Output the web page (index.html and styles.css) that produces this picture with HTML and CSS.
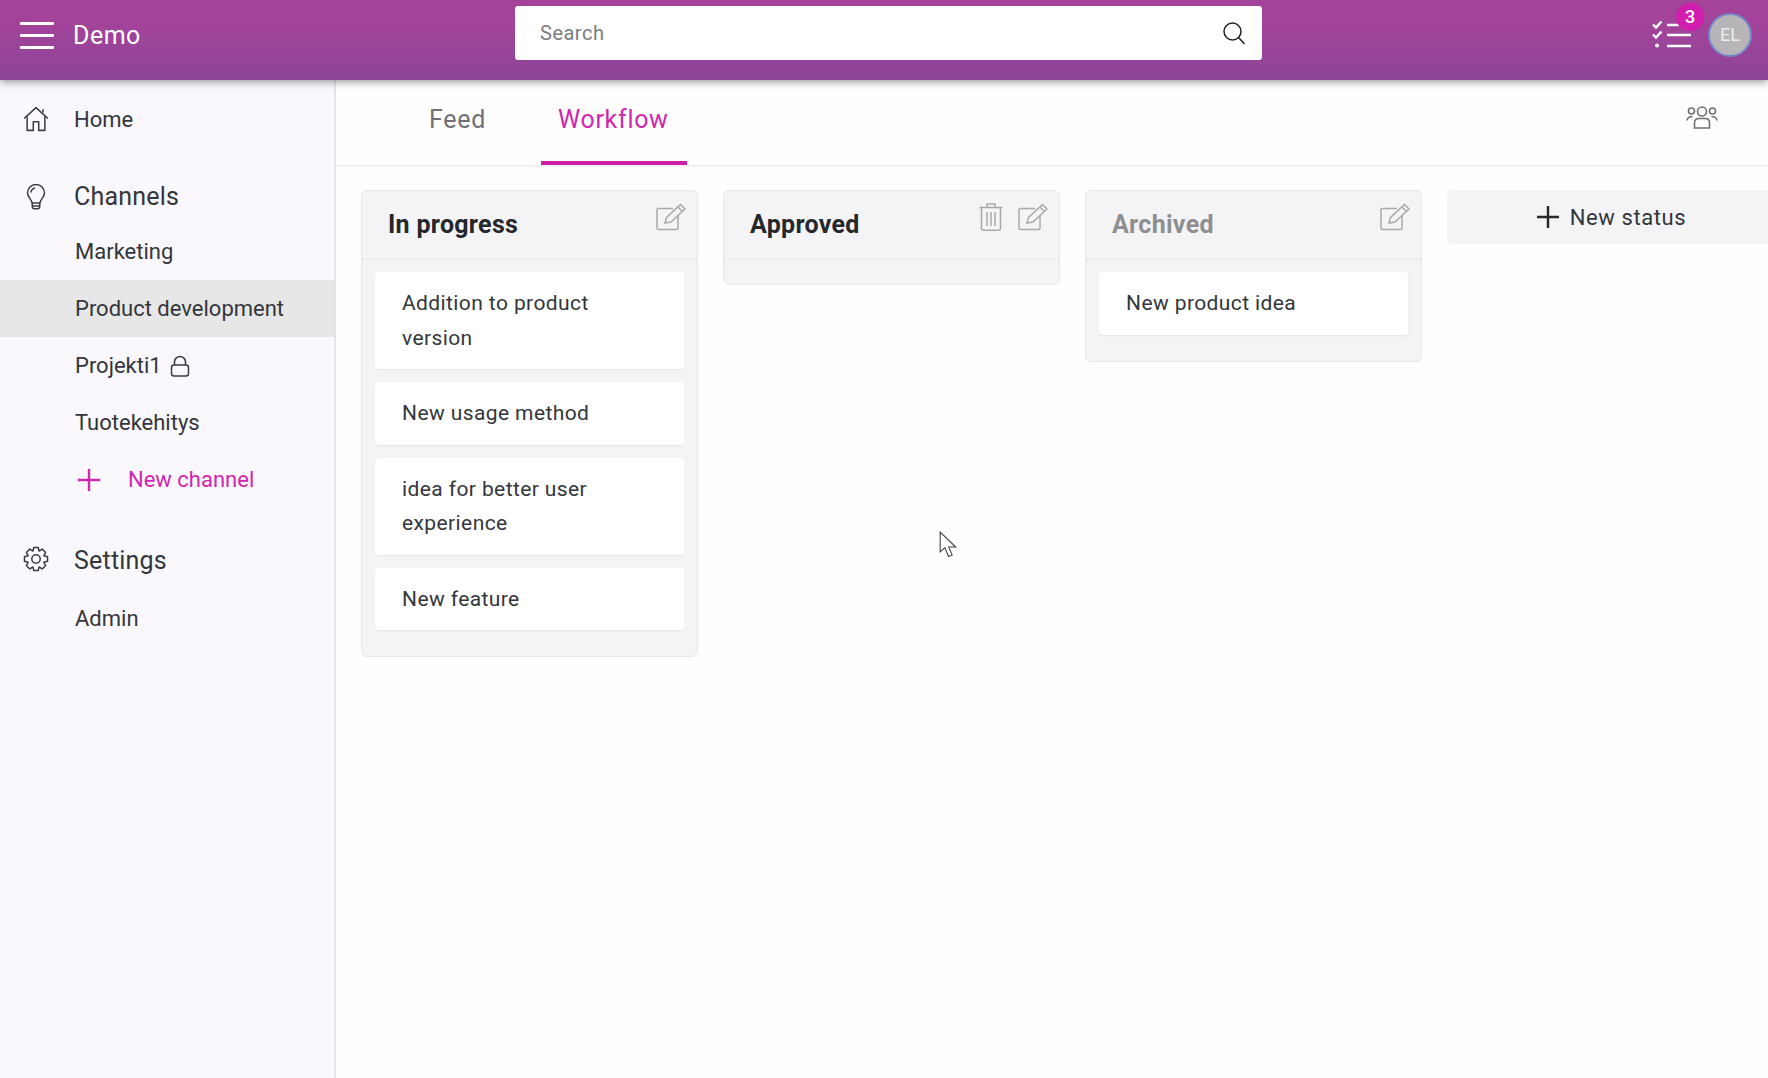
FILE: index.html
```html
<!DOCTYPE html>
<html lang="en">
<head>
  <meta charset="utf-8">
  <title>Demo</title>
  <link rel="stylesheet" href="styles.css">
</head>
<body>
  <!-- Top bar -->
  <header class="topbar">
    <div class="brand">
      <button class="menu-btn" aria-label="Menu"><span></span><span></span><span></span></button>
      <span class="brand-name">Demo</span>
    </div>
    <div class="search">
      <span class="search-text">Search</span>
      <svg class="search-icon" viewBox="0 0 24 24" fill="none" stroke="#222" stroke-width="1.5"><circle cx="10.5" cy="10.5" r="8.5"/><path d="M16.6 16.6 22.5 23"/></svg>
    </div>
    <div class="topbar-right">
      <div class="tasks">
        <svg class="tasks-icon" viewBox="0 0 40 28" fill="none" stroke="#fff" stroke-width="2.4">
          <path d="M1 4.5 4 7.5 9.5 1.5M1 14.5 4 17.5 9.5 11.5"/>
          <path d="M15 5H27M15 15H39M15 26H39"/>
          <circle cx="5" cy="25.5" r="2" fill="#fff" stroke="none"/>
        </svg>
        <span class="badge">3</span>
      </div>
      <div class="avatar">EL</div>
    </div>
  </header>

  <div class="layout">
    <!-- Sidebar -->
    <nav class="sidebar">
      <a class="nav-top nav-home">
        <svg class="nav-icon" viewBox="0 0 24 24" fill="none" stroke="#3a3d42" stroke-width="1.4" stroke-linejoin="round"><path d="M1 11.5 12 1.5 23 11.5"/><path d="M3.8 9.5V22.5H9.5V14.5H14.5V22.5H20.2V9.5"/><path d="M18.5 3V6"/></svg>
        Home
      </a>
      <a class="nav-top nav-head">
        <svg class="nav-icon" viewBox="0 0 24 26" fill="none" stroke="#3a3d42" stroke-width="1.5" stroke-linejoin="round"><path d="M8 19C8 15.5 3.500 13.500 3.500 9A8.500 8.500 0 0 1 20.500 9C20.500 13.500 16 15.500 16 19Z"/><path d="M8.300 19V22.500Q8.300 24.800 10.500 24.800H13.500Q15.700 24.800 15.700 22.500V19M8.500 22H15.500"/><path d="M7 8.500A5 5 0 0 1 11 4"/></svg>
        Channels
      </a>
      <a class="nav-sub">Marketing</a>
      <a class="nav-sub is-active">Product development</a>
      <a class="nav-sub">Projekti1
        <svg class="lock-icon" viewBox="0 0 20 22" fill="none" stroke="#3a3d42" stroke-width="1.5"><rect x="1.500" y="10" width="17" height="11" rx="2.500"/><path d="M4.500 10V7A5.500 5.500 0 0 1 15.500 7V10"/></svg>
      </a>
      <a class="nav-sub">Tuotekehitys</a>
      <a class="nav-sub nav-new">
        <svg class="plus-icon" viewBox="0 0 22 22" stroke="#d126ae" stroke-width="2.400"><path d="M11 0V22M0 11H22"/></svg>
        New channel
      </a>
      <a class="nav-top nav-head nav-settings">
        <svg class="nav-icon" viewBox="0 0 26 26" fill="none" stroke="#3a3d42" stroke-width="1.5" stroke-linejoin="round"><circle cx="13" cy="13" r="4.200"/><path d="M10.800 1.500H15.200L16 5 19.300 3.100 22.600 6.500 20.800 9.700 24.500 10.800V15.200L20.800 16.300 22.600 19.500 19.300 22.900 16 21 15.200 24.500H10.800L10 21 6.700 22.900 3.400 19.500 5.200 16.300 1.500 15.200V10.800L5.200 9.700 3.400 6.500 6.700 3.100 10 5Z"/></svg>
        Settings
      </a>
      <a class="nav-sub">Admin</a>
    </nav>

    <!-- Main area -->
    <main class="content">
      <div class="tabs">
        <a class="tab">Feed</a>
        <a class="tab is-active">Workflow</a>
        <svg class="users-icon" viewBox="0 0 32 23" fill="none" stroke="#6d7176" stroke-width="1.600"><circle cx="16" cy="5.500" r="4.500"/><circle cx="5.500" cy="5" r="3"/><circle cx="26.500" cy="5" r="3"/><path d="M8.500 22V17Q8.500 12.500 13 12.500H19Q23.500 12.500 23.500 17V22Z"/><path d="M1 14.500Q1.500 10.500 6.500 10.500M31 14.500Q30.500 10.500 25.500 10.500"/></svg>
      </div>

      <div class="board">
        <section class="column">
          <div class="column-head">
            <h2>In progress</h2>
            <div class="column-actions">
              <svg class="edit-icon" viewBox="0 0 30 28" fill="none" stroke="#a9a9a9" stroke-width="1.500"><path d="M22 12.500V25Q22 26.500 20.500 26.500H2.500Q1 26.500 1 25V7Q1 5.500 2.500 5.500H17"/><path d="M9 20 10.500 14.500 24.500 1.500 29 6 15 19Z"/><path d="M22 4 26.500 8.500"/></svg>
            </div>
          </div>
          <div class="card">Addition to product version</div>
          <div class="card">New usage method</div>
          <div class="card">idea for better user experience</div>
          <div class="card">New feature</div>
        </section>

        <section class="column">
          <div class="column-head">
            <h2>Approved</h2>
            <div class="column-actions">
              <svg class="trash-icon" viewBox="0 0 24 28" fill="none" stroke="#a9a9a9" stroke-width="1.500"><path d="M0.500 4.500H23.500M8 4.500V1H16V4.500"/><path d="M2.500 4.500V25.500Q2.500 27.200 4.500 27.200H19.500Q21.500 27.200 21.500 25.500V4.500"/><path d="M8 9V23M12 9V23M16 9V23"/></svg>
              <svg class="edit-icon" viewBox="0 0 30 28" fill="none" stroke="#a9a9a9" stroke-width="1.500"><path d="M22 12.500V25Q22 26.500 20.500 26.500H2.500Q1 26.500 1 25V7Q1 5.500 2.500 5.500H17"/><path d="M9 20 10.500 14.500 24.500 1.500 29 6 15 19Z"/><path d="M22 4 26.500 8.500"/></svg>
            </div>
          </div>
        </section>

        <section class="column">
          <div class="column-head">
            <h2 class="is-muted">Archived</h2>
            <div class="column-actions">
              <svg class="edit-icon" viewBox="0 0 30 28" fill="none" stroke="#a9a9a9" stroke-width="1.500"><path d="M22 12.500V25Q22 26.500 20.500 26.500H2.500Q1 26.500 1 25V7Q1 5.500 2.500 5.500H17"/><path d="M9 20 10.500 14.500 24.500 1.500 29 6 15 19Z"/><path d="M22 4 26.500 8.500"/></svg>
            </div>
          </div>
          <div class="card">New product idea</div>
        </section>

        <button class="new-status">
          <svg class="status-plus" viewBox="0 0 22 22" stroke="#24262a" stroke-width="2.400"><path d="M11 0V22M0 11H22"/></svg>
          New status
        </button>
      </div>
    </main>
  </div>

  <!-- Mouse pointer caught in the screenshot -->
  <svg class="pointer" viewBox="0 0 18 26" fill="#fff" stroke="#3b3b3b" stroke-width="1"><path d="M1 1V20L5.500 16 9 24.500 12.500 23 9.200 15.500 16 15.500Z"/></svg>
</body>
</html>
```

FILE: styles.css
```css
/* Global Styles */
* {
    box-sizing: border-box;
}

html, body {
    height: 100%;
}

body {
    font-family: Roboto, "Liberation Sans", sans-serif;
    margin: 0;
    background-color: #fefefe;
    color: #33363b;
    overflow: hidden;
    display: flex;
    flex-direction: column;
}

/* Top bar */
.topbar {
    height: 80px;
    flex: none;
    display: flex;
    align-items: flex-start;
    background: linear-gradient(#a3439a 30%, #8b4599);
    box-shadow: 0 2px 8px rgba(0, 0, 0, 0.4);
    position: relative;
    z-index: 2;
}

.brand {
    width: 515px;
    height: 70px;
    display: flex;
    align-items: center;
    padding-left: 20px;
}

.menu-btn {
    width: 34px;
    height: 27px;
    padding: 0;
    border: none;
    background: none;
    display: flex;
    flex-direction: column;
    justify-content: space-between;
}

.menu-btn span {
    display: block;
    height: 3px;
    border-radius: 1px;
    background-color: #fff;
}

.brand-name {
    margin-left: 19px;
    font-size: 25px;
    letter-spacing: 0.5px;
    color: #fff;
}

.search {
    width: 747px;
    height: 54px;
    margin-top: 6px;
    padding: 0 16px 0 25px;
    display: flex;
    align-items: center;
    justify-content: space-between;
    background-color: #fff;
    border-radius: 3px;
}

.search-text {
    font-size: 20px;
    letter-spacing: 0.5px;
    color: #7c7c84;
}

.search-icon {
    width: 24px;
    height: 24px;
}

.topbar-right {
    margin-left: auto;
    padding: 13px 16px 0 0;
    display: flex;
    align-items: flex-start;
}

.tasks {
    position: relative;
    width: 40px;
    margin-top: 7px;
    margin-right: 16px;
}

.tasks-icon {
    display: block;
    width: 40px;
    height: 28px;
}

.badge {
    position: absolute;
    top: -17px;
    right: -12px;
    width: 28px;
    height: 28px;
    border-radius: 50%;
    background-color: #d21eae;
    color: #fff;
    font-size: 18px;
    font-weight: 500;
    line-height: 28px;
    text-align: center;
}

.avatar {
    width: 44px;
    height: 44px;
    border-radius: 50%;
    background-color: #b7b5b8;
    border: 2px solid #7286c8;
    color: #ececec;
    font-size: 18px;
    line-height: 40px;
    text-align: center;
}

.layout {
    flex: 1;
    display: flex;
    min-height: 0;
}

/* Sidebar */
.sidebar {
    width: 336px;
    flex: none;
    padding-top: 11px;
    background-color: #faf8fc;
    border-right: 2px solid #e6e4ea;
}

.nav-top {
    display: flex;
    align-items: center;
    height: 57px;
    padding-left: 74px;
    position: relative;
    font-size: 22px;
}

.nav-head {
    height: 54px;
    margin-top: 21px;
    font-size: 25px;
    letter-spacing: 0.2px;
}

.nav-settings {
    height: 59px;
    margin-top: 23px;
}

.nav-icon {
    position: absolute;
    left: 23px;
    top: 15px;
    width: 26px;
    height: 26px;
}

.nav-sub {
    display: flex;
    align-items: center;
    height: 57px;
    padding-left: 75px;
    font-size: 22px;
}

.nav-sub.is-active {
    background-color: #e8e7e8;
}

.lock-icon {
    width: 20px;
    height: 22px;
    margin-left: 8px;
}

.nav-new {
    color: #d126ae;
    padding-left: 78px;
}

.plus-icon {
    width: 22px;
    height: 22px;
    margin-right: 28px;
}

/* Main area */
.content {
    flex: 1;
    min-width: 0;
    overflow: hidden;
}

.tabs {
    height: 87px;
    padding-left: 76px;
    padding-right: 50px;
    display: flex;
    align-items: flex-start;
    border-bottom: 2px solid #f1f0f2;
}

.tab {
    height: 85px;
    padding: 25px 17px 0;
    font-size: 25px;
    letter-spacing: 0.7px;
    color: #707176;
}

.tab.is-active {
    margin-left: 38px;
    padding-right: 18px;
    color: #d126ae;
    border-bottom: 4px solid #cc1fa8;
}

.users-icon {
    width: 32px;
    height: 23px;
    margin-left: auto;
    margin-top: 26px;
}

.board {
    padding: 23px 0 0 25px;
    display: flex;
    align-items: flex-start;
    gap: 25px;
}

.column {
    width: 337px;
    flex: none;
    padding-bottom: 26px;
    background-color: #f4f4f6;
    border: 1px solid #e9e9ec;
    border-radius: 6px;
}

.column-head {
    height: 69px;
    padding: 12px 11px 0 26px;
    display: flex;
    justify-content: space-between;
    align-items: flex-start;
    border-bottom: 2px dotted #e4e4e6;
}

.column-head:last-child {
    margin-bottom: -2px;
}

.column-head h2 {
    margin: 7px 0 0;
    font-size: 25px;
    font-weight: 700;
    letter-spacing: 0.3px;
    color: #25272b;
}

.column-head h2.is-muted {
    color: #8e8e90;
}

.column-actions {
    display: flex;
    gap: 15px;
}

.edit-icon {
    width: 30px;
    height: 28px;
}

.trash-icon {
    width: 24px;
    height: 28px;
}

.card {
    margin: 13px 13px 0;
    padding: 14px 40px 14px 27px;
    background-color: #fff;
    border-radius: 4px;
    box-shadow: 0 1px 2px rgba(0, 0, 0, 0.06);
    font-size: 21px;
    letter-spacing: 0.4px;
    line-height: 34.5px;
}

.column-head + .card {
    margin-top: 12px;
}

.new-status {
    width: 337px;
    height: 54px;
    flex: none;
    padding: 0 8px 0 0;
    border: none;
    border-radius: 6px;
    background-color: #f4f4f6;
    display: flex;
    align-items: center;
    justify-content: center;
    gap: 11px;
    font-family: inherit;
    font-size: 22px;
    letter-spacing: 0.6px;
    color: #33363b;
}

.status-plus {
    width: 22px;
    height: 22px;
}

.pointer {
    position: absolute;
    left: 939px;
    top: 531px;
    width: 19px;
    height: 27px;
}
```
